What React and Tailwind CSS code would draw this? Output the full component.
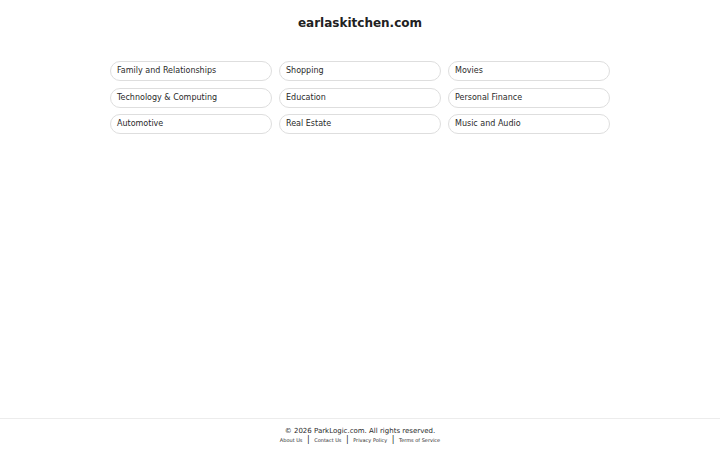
import React from 'react';

const topics = [
  'Family and Relationships',
  'Shopping',
  'Movies',
  'Technology & Computing',
  'Education',
  'Personal Finance',
  'Automotive',
  'Real Estate',
  'Music and Audio',
];

const links = ['About Us', 'Contact Us', 'Privacy Policy', 'Terms of Service'];

export default function App() {
  return (
    <div className="min-h-screen flex flex-col bg-white text-[#222]" style={{ fontFamily: '"DejaVu Sans", sans-serif' }}>
      <main className="flex-1">
        <h1 className="text-center font-bold text-[12px] pt-[16px] leading-[15px]">earlaskitchen.com</h1>
        <div className="mx-auto mt-[30px] w-[500px] grid grid-cols-3 gap-x-[7px] gap-y-[6.5px]">
          {topics.map((t) => (
            <a
              key={t}
              href="#"
              className="h-[20px] flex items-center pl-[6px] rounded-full border border-[#dedede] text-[8px] text-[#2a2a2a]"
            >
              {t}
            </a>
          ))}
        </div>
      </main>
      <footer className="h-[32px] border-t border-[#ececec] flex flex-col items-center pt-[7px]">
        <p className="text-[7px] leading-[10px] text-[#2a2a2a]">© 2026 ParkLogic.com. All rights reserved.</p>
        <div className="flex items-center text-[5px] leading-[8px] text-[#2a2a2a]">
          {links.map((l, i) => (
            <React.Fragment key={l}>
              {i > 0 && <span className="mx-[4.5px] text-[8px]">|</span>}
              <a href="#">{l}</a>
            </React.Fragment>
          ))}
        </div>
      </footer>
    </div>
  );
}
